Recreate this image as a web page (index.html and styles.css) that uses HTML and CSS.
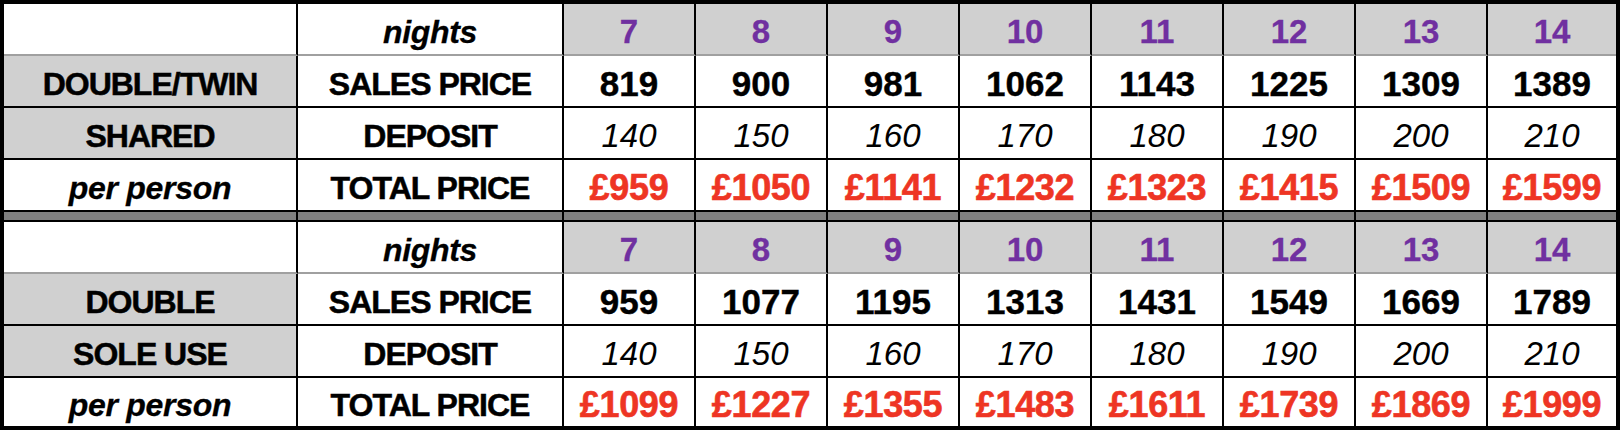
FILE: index.html
```html
<!DOCTYPE html>
<html lang="en">
<head>
<meta charset="utf-8">
<title>Prices</title>
<link rel="stylesheet" href="styles.css">
</head>
<body>
<div class="sheet">
  <div class="row row--head">
    <div class="cell"></div>
    <div class="cell label-it">nights</div>
    <div class="cell fill night">7</div>
    <div class="cell fill night">8</div>
    <div class="cell fill night">9</div>
    <div class="cell fill night">10</div>
    <div class="cell fill night">11</div>
    <div class="cell fill night">12</div>
    <div class="cell fill night">13</div>
    <div class="cell fill night">14</div>
  </div>
  <div class="row">
    <div class="cell fill label">DOUBLE/TWIN</div>
    <div class="cell label">SALES PRICE</div>
    <div class="cell sale">819</div>
    <div class="cell sale">900</div>
    <div class="cell sale">981</div>
    <div class="cell sale">1062</div>
    <div class="cell sale">1143</div>
    <div class="cell sale">1225</div>
    <div class="cell sale">1309</div>
    <div class="cell sale">1389</div>
  </div>
  <div class="row">
    <div class="cell fill label">SHARED</div>
    <div class="cell label">DEPOSIT</div>
    <div class="cell dep">140</div>
    <div class="cell dep">150</div>
    <div class="cell dep">160</div>
    <div class="cell dep">170</div>
    <div class="cell dep">180</div>
    <div class="cell dep">190</div>
    <div class="cell dep">200</div>
    <div class="cell dep">210</div>
  </div>
  <div class="row">
    <div class="cell label-it">per person</div>
    <div class="cell label">TOTAL PRICE</div>
    <div class="cell total">£959</div>
    <div class="cell total">£1050</div>
    <div class="cell total">£1141</div>
    <div class="cell total">£1232</div>
    <div class="cell total">£1323</div>
    <div class="cell total">£1415</div>
    <div class="cell total">£1509</div>
    <div class="cell total">£1599</div>
  </div>
  <div class="row row--sep">
    <div class="cell"></div><div class="cell"></div><div class="cell"></div><div class="cell"></div><div class="cell"></div>
    <div class="cell"></div><div class="cell"></div><div class="cell"></div><div class="cell"></div><div class="cell"></div>
  </div>
  <div class="row row--head">
    <div class="cell"></div>
    <div class="cell label-it">nights</div>
    <div class="cell fill night">7</div>
    <div class="cell fill night">8</div>
    <div class="cell fill night">9</div>
    <div class="cell fill night">10</div>
    <div class="cell fill night">11</div>
    <div class="cell fill night">12</div>
    <div class="cell fill night">13</div>
    <div class="cell fill night">14</div>
  </div>
  <div class="row">
    <div class="cell fill label">DOUBLE</div>
    <div class="cell label">SALES PRICE</div>
    <div class="cell sale">959</div>
    <div class="cell sale">1077</div>
    <div class="cell sale">1195</div>
    <div class="cell sale">1313</div>
    <div class="cell sale">1431</div>
    <div class="cell sale">1549</div>
    <div class="cell sale">1669</div>
    <div class="cell sale">1789</div>
  </div>
  <div class="row">
    <div class="cell fill label">SOLE USE</div>
    <div class="cell label">DEPOSIT</div>
    <div class="cell dep">140</div>
    <div class="cell dep">150</div>
    <div class="cell dep">160</div>
    <div class="cell dep">170</div>
    <div class="cell dep">180</div>
    <div class="cell dep">190</div>
    <div class="cell dep">200</div>
    <div class="cell dep">210</div>
  </div>
  <div class="row row--last">
    <div class="cell label-it">per person</div>
    <div class="cell label">TOTAL PRICE</div>
    <div class="cell total">£1099</div>
    <div class="cell total">£1227</div>
    <div class="cell total">£1355</div>
    <div class="cell total">£1483</div>
    <div class="cell total">£1611</div>
    <div class="cell total">£1739</div>
    <div class="cell total">£1869</div>
    <div class="cell total">£1999</div>
  </div>
</div>
</body>
</html>
```

FILE: styles.css
```css
html, body {
  margin: 0;
  padding: 0;
  background: #ffffff;
}

.sheet {
  box-sizing: border-box;
  width: 1620px;
  height: 430px;
  border: 4px solid #000000;
  display: flex;
  flex-direction: column;
  font-family: "Liberation Sans", Arial, sans-serif;
  color: #000000;
}

.row {
  display: grid;
  grid-template-columns: 294px 266px repeat(7, 132px) 128px;
  height: 52px;
}

.row--sep {
  height: 10px;
}

.row--last {
  height: 48px;
}

.cell {
  box-sizing: border-box;
  border-right: 2px solid #000000;
  border-bottom: 2px solid #000000;
  display: flex;
  align-items: center;
  justify-content: center;
  padding-top: 6px;
  white-space: nowrap;
  background: #ffffff;
}

.cell:last-child {
  border-right: none;
}

.row--head .cell {
  border-bottom-color: #a0a0a0;
}

.row--last .cell {
  border-bottom: none;
}

.row--sep .cell {
  background: #808080;
  padding: 0;
}

.fill {
  background: #d0d0d0;
}

.label {
  font-weight: 700;
  font-size: 32px;
  letter-spacing: -1px;
  -webkit-text-stroke: 0.5px #000000;
}

.label-it {
  font-weight: 700;
  font-style: italic;
  font-size: 32px;
  letter-spacing: -0.3px;
  -webkit-text-stroke: 0.3px #000000;
}

.night {
  font-weight: 700;
  font-size: 33px;
  color: #7030a0;
  -webkit-text-stroke: 0.3px #7030a0;
}

.sale {
  font-weight: 700;
  font-size: 35px;
  -webkit-text-stroke: 0.4px #000000;
}

.dep {
  font-style: italic;
  font-size: 33px;
}

.total {
  font-weight: 700;
  font-size: 36px;
  color: #ee3524;
  letter-spacing: -0.3px;
  -webkit-text-stroke: 0.6px #ee3524;
}
```
